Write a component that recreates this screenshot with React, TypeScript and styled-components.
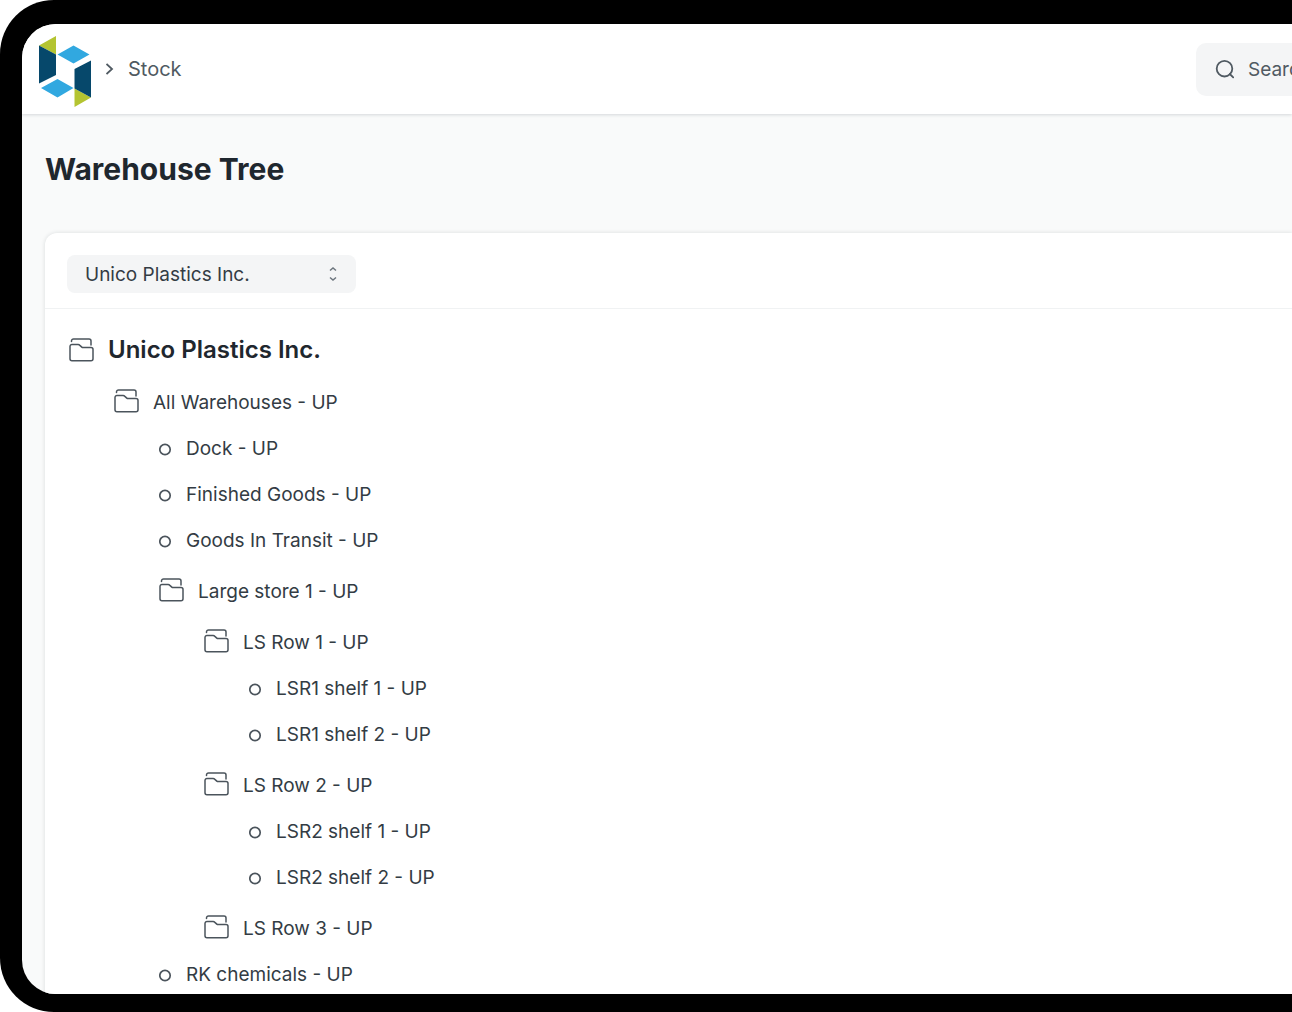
import React from "react";
import styled, { createGlobalStyle } from "styled-components";

const GlobalStyle = createGlobalStyle`
  *, *::before, *::after { box-sizing: border-box; }
  body {
    margin: 0;
    background: #fff;
    color: #333c44;
    font-family: Inter, "Liberation Sans", sans-serif;
    font-size: 19px;
    line-height: 24px;
  }
  button, input, select { font: inherit; color: inherit; }
`;

const Device = styled.div`
  display: flex;
  height: 100vh;
  padding: 24px 0 18px 22px;
  background: #000;
  border-radius: 54px 0 0 54px;
`;

const Screen = styled.div`
  display: flex;
  flex: 1;
  flex-direction: column;
  min-width: 0;
  overflow: hidden;
  background: #f9fafa;
  border-radius: 34px 0 0 34px;
`;

const Navbar = styled.header`
  display: flex;
  flex: none;
  align-items: center;
  justify-content: space-between;
  height: 90px;
  padding-left: 16px;
  background: #fff;
  box-shadow: 0 1px 3px rgba(25, 39, 52, 0.16);
`;

const Breadcrumbs = styled.nav`
  display: flex;
  align-items: center;
  gap: 14px;
`;

const Crumb = styled.a`
  display: flex;
  color: #505a62;
  font-size: 20px;
  text-decoration: none;
`;

const SearchBox = styled.label`
  display: flex;
  align-items: center;
  gap: 12px;
  width: 96px;
  height: 53px;
  padding-left: 19px;
  background: #f4f5f6;
  border-radius: 10px 0 0 10px;
  svg { flex: none; }
`;

const SearchInput = styled.input`
  flex: 1;
  min-width: 0;
  padding: 2px 0 0;
  border: 0;
  outline: 0;
  background: transparent;
  &::placeholder { color: #505a62; opacity: 1; }
`;

const Title = styled.h1`
  flex: none;
  margin: 0;
  padding: 37px 23px 46px;
  color: #1f272e;
  font-size: 30px;
  font-weight: 700;
  line-height: 36px;
`;

const Card = styled.main`
  flex: 1 0 auto;
  margin-left: 23px;
  background: #fff;
  border-radius: 12px 0 0 0;
  box-shadow: 0 0 4px rgba(25, 39, 52, 0.14);
`;

const Toolbar = styled.div`
  padding: 22px 22px 15px;
  border-bottom: 1px solid #f0f2f3;
`;

const SelectWrap = styled.div`
  display: grid;
  align-items: center;
  width: 289px;
  > * { grid-area: 1 / 1; }
  > svg { justify-self: end; margin-right: 18px; pointer-events: none; }
`;

const CompanySelect = styled.select`
  width: 100%;
  height: 38px;
  padding: 2px 40px 0 18px;
  appearance: none;
  border: 0;
  border-radius: 8px;
  background: #f4f5f6;
`;

const Tree = styled.ul<{ $root?: boolean }>`
  margin: 0;
  padding: ${(p) => (p.$root ? "15px 0 0 24px" : "0 0 0 45px")};
  list-style: none;
`;

const Node = styled.button<{ $kind: "root" | "folder" | "leaf" }>`
  display: flex;
  align-items: center;
  gap: 14px;
  height: ${(p) => (p.$kind === "leaf" ? 46 : 51)}px;
  padding: ${(p) => (p.$kind === "folder" ? "5px 0 0" : "0")};
  border: 0;
  background: transparent;
  font-size: ${(p) => (p.$kind === "root" ? 24 : 19)}px;
  font-weight: ${(p) => (p.$kind === "root" ? 600 : 400)};
  color: ${(p) => (p.$kind === "root" ? "#1f272e" : "#333c44")};
  cursor: pointer;
  svg { margin-bottom: ${(p) => (p.$kind === "folder" ? 4 : 0)}px; }
`;

const Logo = () => (
  <svg width="54" height="78" viewBox="0 -6 54 78" aria-label="Home" role="img">
    <path fill="#b4c431" d="M1 9.500 18 0v18.500zM36.500 52.500 53 61.500 36.500 71z" />
    <path fill="#06486b" d="M1 9.500 18 18.500V39L1 47.500zM53 24.500v37L36.500 52.500V33z" />
    <path fill="#31a8e0" d="M19.500 18.500 35.500 9.500 51.500 18.500 35.500 27.500zM3 52 19.500 43 35.500 52 19.500 61.500z" />
  </svg>
);

const Chevron = () => (
  <svg width="8" height="14" viewBox="0 0 8 14" fill="none" stroke="#505a62" strokeWidth="1.800" aria-hidden="true">
    <path d="m.5 2 5.500 5-5.500 5" />
  </svg>
);

const SearchIcon = () => (
  <svg width="21" height="21" viewBox="0 0 21 21" fill="none" stroke="#505a62" strokeWidth="1.800" aria-hidden="true">
    <circle cx="9.500" cy="9.700" r="7.800" />
    <path d="m14.800 15 3.400 3.400" strokeLinecap="round" />
  </svg>
);

const SelectIcon = () => (
  <svg width="10" height="18" viewBox="0 0 10 18" fill="none" stroke="#6c757d" strokeWidth="1.500" aria-hidden="true">
    <path d="m2 5.500 3-2.500 3 2.500M2 12.500 5 15l3-2.500" />
  </svg>
);

const FolderIcon = () => (
  <svg width="25" height="24" viewBox="0 0 25 24" fill="none" stroke="#4b545c" strokeWidth="1.500" strokeLinecap="round" strokeLinejoin="round" aria-hidden="true">
    <path d="M1 8.500A2 2 0 0 1 3 6.500h6.200c.6 0 1 .2 1.400.6l2.200 2c.4.4.8.5 1.300.500H22a2 2 0 0 1 2 2v9.200a2 2 0 0 1-2 2H3a2 2 0 0 1-2-2z" />
    <path d="M2.500 3.500V3a2 2 0 0 1 2-2H20a2 2 0 0 1 2 2v4" />
  </svg>
);

const LeafIcon = () => (
  <svg width="13" height="13" viewBox="0 0 13 13" fill="none" stroke="#4b545c" strokeWidth="1.700" aria-hidden="true">
    <circle cx="6" cy="6.500" r="5.200" />
  </svg>
);

type Warehouse = { name: string; children?: Warehouse[]; group?: boolean };

const company: Warehouse = {
  name: "Unico Plastics Inc.",
  children: [
    {
      name: "All Warehouses - UP",
      children: [
        { name: "Dock - UP" },
        { name: "Finished Goods - UP" },
        { name: "Goods In Transit - UP" },
        {
          name: "Large store 1 - UP",
          children: [
            { name: "LS Row 1 - UP", children: [{ name: "LSR1 shelf 1 - UP" }, { name: "LSR1 shelf 2 - UP" }] },
            { name: "LS Row 2 - UP", children: [{ name: "LSR2 shelf 1 - UP" }, { name: "LSR2 shelf 2 - UP" }] },
            { name: "LS Row 3 - UP", group: true },
          ],
        },
        { name: "RK chemicals - UP" },
      ],
    },
  ],
};

function TreeNode({ node, root }: { node: Warehouse; root?: boolean }) {
  const isFolder = node.group || !!node.children;
  return (
    <li>
      <Node type="button" $kind={root ? "root" : isFolder ? "folder" : "leaf"}>
        {isFolder ? <FolderIcon /> : <LeafIcon />}
        <span>{node.name}</span>
      </Node>
      {node.children && (
        <Tree>
          {node.children.map((child) => (
            <TreeNode key={child.name} node={child} />
          ))}
        </Tree>
      )}
    </li>
  );
}

export default function App() {
  return (
    <>
      <GlobalStyle />
      <Device>
        <Screen>
          <Navbar>
            <Breadcrumbs aria-label="Breadcrumb">
              <Crumb href="#home"><Logo /></Crumb>
              <Chevron />
              <Crumb href="#stock">Stock</Crumb>
            </Breadcrumbs>
            <SearchBox>
              <SearchIcon />
              <SearchInput type="text" placeholder="Search" aria-label="Search" />
            </SearchBox>
          </Navbar>
          <Title>Warehouse Tree</Title>
          <Card>
            <Toolbar>
              <SelectWrap>
                <CompanySelect aria-label="Company">
                  <option>Unico Plastics Inc.</option>
                </CompanySelect>
                <SelectIcon />
              </SelectWrap>
            </Toolbar>
            <Tree $root>
              <TreeNode node={company} root />
            </Tree>
          </Card>
        </Screen>
      </Device>
    </>
  );
}
